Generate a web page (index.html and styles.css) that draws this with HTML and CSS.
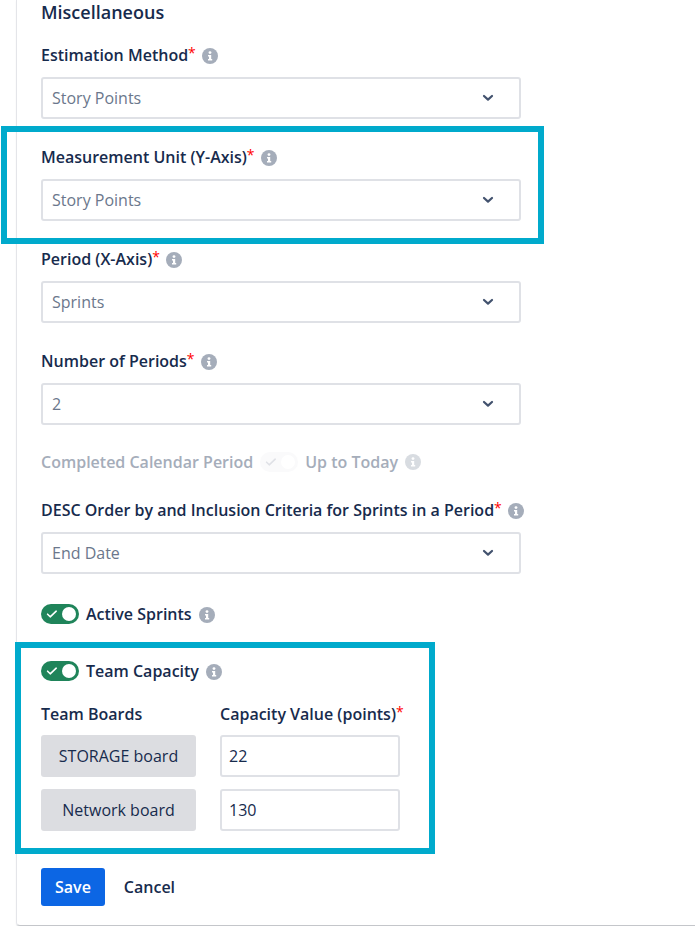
FILE: index.html
```html
<!DOCTYPE html>
<html lang="en">
<head>
<meta charset="UTF-8">
<meta name="viewport" content="width=device-width, initial-scale=1.0">
<title>Miscellaneous</title>
<link rel="stylesheet" href="styles.css">
</head>
<body>

<!-- Shared icons -->
<svg class="sprite" aria-hidden="true">
    <symbol id="icon-info" viewBox="0 0 16 16">
        <circle cx="8" cy="8" r="8" fill="currentColor"/>
        <circle cx="8" cy="4.6" r="1.4" fill="#fff"/>
        <path d="M6 7h3.2v4h1v1.5H6V11h1V8.5H6z" fill="#fff"/>
    </symbol>
    <symbol id="icon-chevron" viewBox="0 0 12 8">
        <path d="M2 2l4 3.6L10 2" fill="none" stroke="currentColor" stroke-width="2.2" stroke-linecap="round" stroke-linejoin="round"/>
    </symbol>
    <symbol id="icon-check" viewBox="0 0 12 10">
        <path d="M1.6 5.2l2.6 2.6 6-5.6" fill="none" stroke="currentColor" stroke-width="1.6" stroke-linecap="round" stroke-linejoin="round"/>
    </symbol>
</svg>

<form class="panel">
    <h2 class="title">Miscellaneous</h2>

    <div class="field">
        <div class="label-row">
            <label for="estimation">Estimation Method<span class="required">*</span></label>
            <svg class="info"><use href="#icon-info"/></svg>
        </div>
        <div class="select-box">
            <select id="estimation"><option>Story Points</option></select>
            <svg class="chevron"><use href="#icon-chevron"/></svg>
        </div>
    </div>

    <div class="field highlight highlight-unit">
        <div class="label-row">
            <label for="unit">Measurement Unit (Y-Axis)<span class="required">*</span></label>
            <svg class="info"><use href="#icon-info"/></svg>
        </div>
        <div class="select-box">
            <select id="unit"><option>Story Points</option></select>
            <svg class="chevron"><use href="#icon-chevron"/></svg>
        </div>
    </div>

    <div class="field">
        <div class="label-row">
            <label for="period">Period (X-Axis)<span class="required">*</span></label>
            <svg class="info"><use href="#icon-info"/></svg>
        </div>
        <div class="select-box">
            <select id="period"><option>Sprints</option></select>
            <svg class="chevron"><use href="#icon-chevron"/></svg>
        </div>
    </div>

    <div class="field">
        <div class="label-row">
            <label for="periods">Number of Periods<span class="required">*</span></label>
            <svg class="info"><use href="#icon-info"/></svg>
        </div>
        <div class="select-box">
            <select id="periods"><option>2</option></select>
            <svg class="chevron"><use href="#icon-chevron"/></svg>
        </div>
    </div>

    <div class="toggle-row disabled">
        <span>Completed Calendar Period</span>
        <span class="toggle">
            <input type="checkbox" id="today" checked disabled>
            <svg class="check"><use href="#icon-check"/></svg>
        </span>
        <label for="today">Up to Today</label>
        <svg class="info"><use href="#icon-info"/></svg>
    </div>

    <div class="field">
        <div class="label-row">
            <label for="order">DESC Order by and Inclusion Criteria for Sprints in a Period<span class="required">*</span></label>
            <svg class="info"><use href="#icon-info"/></svg>
        </div>
        <div class="select-box">
            <select id="order"><option>End Date</option></select>
            <svg class="chevron"><use href="#icon-chevron"/></svg>
        </div>
    </div>

    <div class="toggle-row">
        <span class="toggle">
            <input type="checkbox" id="active" checked>
            <svg class="check"><use href="#icon-check"/></svg>
        </span>
        <label for="active">Active Sprints</label>
        <svg class="info"><use href="#icon-info"/></svg>
    </div>

    <div class="capacity highlight highlight-capacity">
        <div class="toggle-row">
            <span class="toggle">
                <input type="checkbox" id="capacity" checked>
                <svg class="check"><use href="#icon-check"/></svg>
            </span>
            <label for="capacity">Team Capacity</label>
            <svg class="info"><use href="#icon-info"/></svg>
        </div>
        <div class="boards">
            <div class="heading">Team Boards</div>
            <div class="heading">Capacity Value (points)<span class="required">*</span></div>
            <label class="board" for="storage">STORAGE board</label>
            <input class="value" type="text" id="storage" value="22">
            <label class="board" for="network">Network board</label>
            <input class="value" type="text" id="network" value="130">
        </div>
    </div>

    <div class="actions">
        <button type="submit" class="btn btn-primary">Save</button>
        <button type="button" class="btn">Cancel</button>
    </div>
</form>

</body>
</html>
```

FILE: styles.css
```css
* {
    box-sizing: border-box;
}

body {
    margin: 0;
    background-color: #fff;
    color: #172b4d;
    font-family: "Segoe UI", "Open Sans", "Noto Sans", sans-serif;
    font-size: 16px;
    line-height: 24px;
}

.sprite {
    display: none;
}

.panel {
    margin-left: 16px;
    padding: 0 24px 19px;
    border-left: 1px solid #e4e5e9;
    border-bottom: 1px solid #c4c6ca;
    border-bottom-left-radius: 4px;
    box-shadow: 0 1px 1px rgba(9, 30, 66, 0.12);
}

.title {
    margin: 0 0 19px;
    font-size: 18px;
    font-weight: 600;
    line-height: 24px;
}

.field {
    max-width: 480px;
    margin-bottom: 26px;
}

.label-row {
    display: flex;
    align-items: center;
    gap: 6px;
    margin-bottom: 10px;
    font-weight: 600;
    white-space: nowrap;
}

.required {
    color: #f00;
    font-size: 14px;
    font-weight: 400;
    line-height: 1;
    vertical-align: 3px;
}

.info {
    flex: none;
    width: 16px;
    height: 16px;
    margin-top: 2px;
    color: #a5adba;
}

/* Drop-downs */
.select-box {
    display: grid;
    align-items: center;
}

.select-box select,
.select-box .chevron {
    grid-area: 1 / 1;
}

.select-box select {
    width: 100%;
    height: 42px;
    padding: 0 9px;
    appearance: none;
    background-color: #fff;
    border: 2px solid #dfe1e6;
    border-radius: 3px;
    color: #6b778c;
    font: inherit;
}

.chevron {
    justify-self: end;
    width: 12px;
    height: 8px;
    margin-right: 27px;
    color: #42526e;
    pointer-events: none;
}

/* Toggles */
.toggle-row {
    display: flex;
    align-items: center;
    gap: 7px;
    margin-top: 28px;
    margin-bottom: 33px;
    font-weight: 600;
}

.toggle {
    display: grid;
    align-items: center;
}

.toggle input,
.toggle .check {
    grid-area: 1 / 1;
}

.toggle input {
    display: flex;
    align-items: center;
    justify-content: flex-end;
    width: 38px;
    height: 20px;
    margin: 0;
    padding: 3px;
    appearance: none;
    background-color: #1f845a;
    border-radius: 10px;
}

.toggle input::before {
    content: "";
    width: 14px;
    height: 14px;
    background-color: #fff;
    border-radius: 50%;
}

.check {
    width: 12px;
    height: 10px;
    margin-left: 5px;
    color: #fff;
    pointer-events: none;
}

.disabled {
    margin-top: -1px;
    margin-bottom: 24px;
    color: #a5adba;
}

.disabled .toggle input {
    background-color: #fafafb;
}

.disabled .check {
    color: #dfe1e6;
}

.disabled .info {
    margin-top: 0;
    color: #d8dce1;
}

/* Frames drawn over the form */
.highlight {
    position: relative;
}

.highlight::after {
    content: "";
    position: absolute;
    border: 6px solid #00aacc;
    pointer-events: none;
}

.highlight-unit::after {
    inset: -19px -23px -23px -40px;
}

.highlight-capacity::after {
    inset: -17px -35px -23px -26px;
}

/* Team capacity */
.capacity {
    width: fit-content;
    margin-bottom: 37px;
}

.capacity .toggle-row {
    margin-bottom: 19px;
}

.boards {
    display: grid;
    grid-template-columns: 155px 180px;
    column-gap: 24px;
    row-gap: 12px;
}

.heading {
    margin-bottom: -3px;
    font-weight: 600;
    white-space: nowrap;
}

.board {
    display: flex;
    align-items: center;
    justify-content: center;
    height: 42px;
    background-color: #dcdde1;
    border-radius: 3px;
}

.value {
    width: 100%;
    height: 42px;
    padding: 0 7px;
    border: 2px solid #dfe1e6;
    border-radius: 3px;
    color: #172b4d;
    font: inherit;
}

.actions {
    display: flex;
    gap: 5px;
}

.btn {
    height: 38px;
    padding: 0 14px;
    background-color: transparent;
    border: none;
    border-radius: 3px;
    color: #172b4d;
    font: inherit;
    font-weight: 600;
    cursor: pointer;
}

.btn-primary {
    background-color: #0c66e4;
    color: #fff;
}
```
